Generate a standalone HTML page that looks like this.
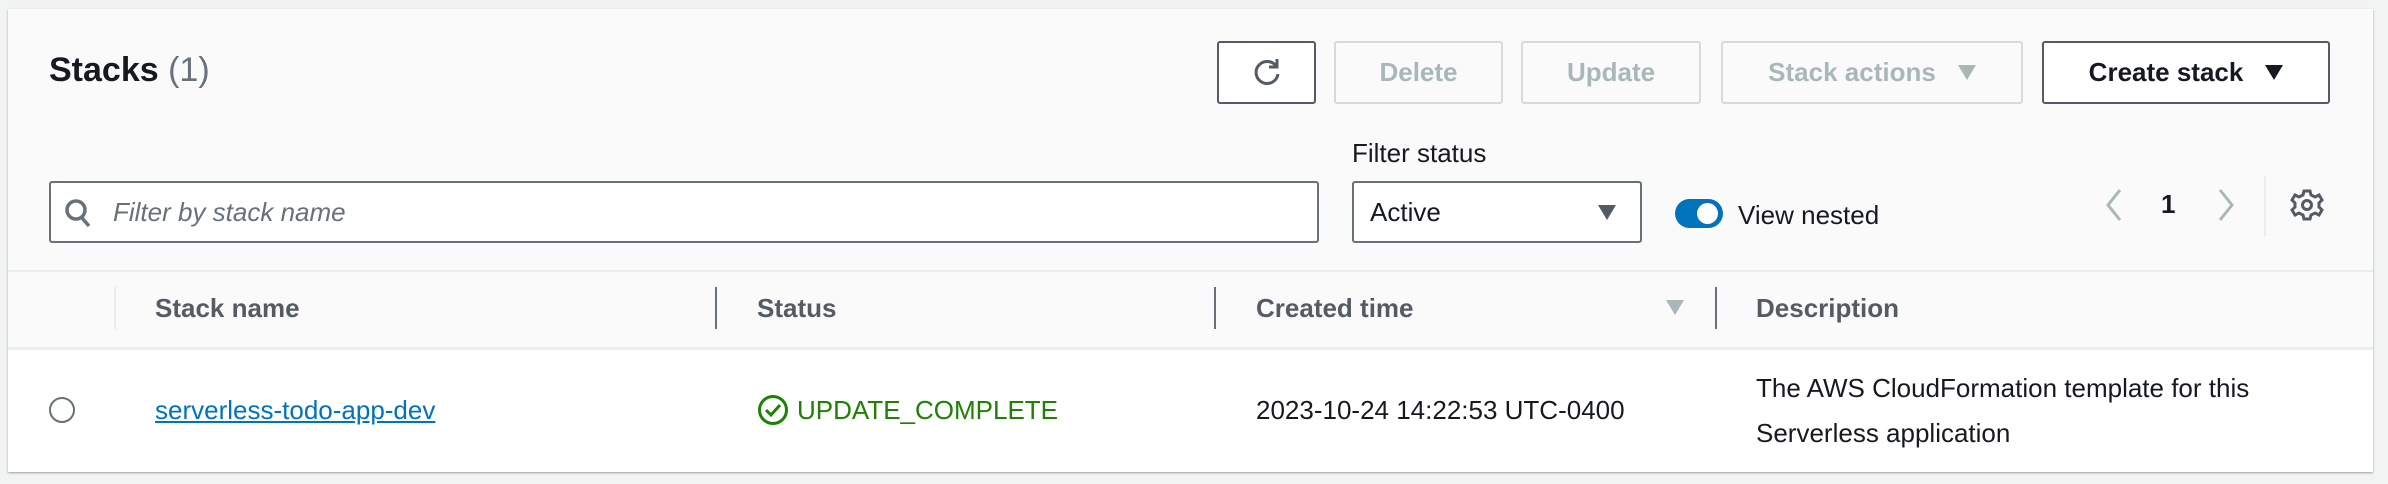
<!DOCTYPE html>
<html><head><meta charset="utf-8"><style>
*{box-sizing:border-box;margin:0;padding:0}
body{width:2388px;height:484px;background:#f2f3f3;font-family:"Liberation Sans",sans-serif;color:#16191f;position:relative;overflow:hidden}
.a{position:absolute}
.panel{left:8px;top:9px;width:2365px;height:463px;background:#fafafa;box-shadow:0 1px 2px rgba(0,0,0,.35)}
.btn{position:absolute;top:41px;height:63px;border:2px solid #545b64;border-radius:3px;background:#fff;font-weight:bold;font-size:26px;display:flex;align-items:center;justify-content:center;color:#545b64}
.dis{border:2px solid #d5dbdb;color:#aab7b8;background:#fafafa}
.tri{display:inline-block;width:0;height:0;border-left:9px solid transparent;border-right:9px solid transparent;border-top:15px solid currentColor;margin-left:22px}
.hd{position:absolute;top:293px;font-size:26px;font-weight:bold;color:#545b64}
.vd{position:absolute;top:287px;width:2px;height:42px;background:#687078}
.tx{position:absolute;font-size:26px}
</style></head><body>
<div class="a panel"></div>
<div class="a" style="left:8px;top:270px;width:2365px;height:2px;background:#eaeded"></div>
<div class="a" style="left:8px;top:347px;width:2365px;height:125px;background:#fff;border-top:3px solid #eaeded"></div>

<div class="a" style="left:49px;top:51px;font-size:34px;font-weight:bold">Stacks <span style="font-weight:normal;color:#687078">(1)</span></div>

<div class="btn" style="left:1217px;width:99px">
<svg width="34" height="34" viewBox="0 0 34 34" fill="none" stroke="#545b64" stroke-width="3"><path d="M26 10 A11 11 0 1 0 28 18"/><path d="M27 3 V11 H19"/></svg></div>
<div class="btn dis" style="left:1334px;width:169px">Delete</div>
<div class="btn dis" style="left:1521px;width:180px">Update</div>
<div class="btn dis" style="left:1721px;width:302px">Stack actions<span class="tri"></span></div>
<div class="btn" style="left:2042px;width:288px;color:#16191f;border-color:#545b64">Create stack<span class="tri"></span></div>

<div class="tx" style="left:1352px;top:138px">Filter status</div>

<div class="a" style="left:49px;top:181px;width:1270px;height:62px;border:2px solid #687078;border-radius:3px;background:#fff"></div>
<svg class="a" style="left:64px;top:197px" width="30" height="32" viewBox="0 0 30 32" fill="none" stroke="#687078" stroke-width="3.5"><circle cx="12" cy="13" r="9"/><path d="M18 21 L25 29"/></svg>
<div class="tx" style="left:113px;top:197px;font-style:italic;color:#687078">Filter by stack name</div>

<div class="a" style="left:1352px;top:181px;width:290px;height:62px;border:2px solid #687078;border-radius:3px;background:#fff"></div>
<div class="tx" style="left:1370px;top:197px">Active</div>
<div class="a" style="left:1598px;top:205px;width:0;height:0;border-left:9px solid transparent;border-right:9px solid transparent;border-top:15px solid #545b64"></div>

<div class="a" style="left:1675px;top:199px;width:48px;height:29px;border-radius:15px;background:#0073bb"></div>
<div class="a" style="left:1697px;top:203px;width:21px;height:21px;border-radius:50%;background:#fff"></div>
<div class="tx" style="left:1738px;top:200px">View nested</div>

<svg class="a" style="left:2104px;top:188px" width="20" height="34" viewBox="0 0 20 34" fill="none" stroke="#aab7b8" stroke-width="3"><path d="M16 2 L4 17 L16 32"/></svg>
<div class="tx" style="left:2161px;top:189px;font-weight:bold">1</div>
<svg class="a" style="left:2216px;top:188px" width="20" height="34" viewBox="0 0 20 34" fill="none" stroke="#aab7b8" stroke-width="3"><path d="M4 2 L16 17 L4 32"/></svg>
<div class="a" style="left:2264px;top:176px;width:2px;height:60px;background:#eaeded"></div>
<svg class="a" style="left:2290px;top:188px" width="34" height="34" viewBox="0 0 34 34" fill="none" stroke="#545b64" stroke-width="3"><path d="M14 3h6l1 4 4 2 4-2 3 5-3 3v4l3 3-3 5-4-2-4 2-1 4h-6l-1-4-4-2-4 2-3-5 3-3v-4l-3-3 3-5 4 2 4-2z"/><circle cx="17" cy="17" r="4.5"/></svg>

<div class="a" style="left:114px;top:287px;width:2px;height:42px;background:#eaeded"></div>
<div class="hd" style="left:155px">Stack name</div>
<div class="vd" style="left:715px"></div>
<div class="hd" style="left:757px">Status</div>
<div class="vd" style="left:1214px"></div>
<div class="hd" style="left:1256px">Created time</div>
<div class="a" style="left:1666px;top:300px;width:0;height:0;border-left:9px solid transparent;border-right:9px solid transparent;border-top:15px solid #aab7b8"></div>
<div class="vd" style="left:1715px"></div>
<div class="hd" style="left:1756px">Description</div>

<div class="a" style="left:49px;top:397px;width:26px;height:26px;border:2px solid #687078;border-radius:50%;background:#fff"></div>
<div class="tx" style="left:155px;top:395px;color:#0073bb;text-decoration:underline">serverless-todo-app-dev</div>
<svg class="a" style="left:757px;top:394px" width="32" height="32" viewBox="0 0 32 32" fill="none" stroke="#1d8102" stroke-width="3"><circle cx="16" cy="16" r="13.5"/><path d="M9 16 L14 21 L23 11"/></svg>
<div class="tx" style="left:797px;top:395px;color:#1d8102">UPDATE_COMPLETE</div>
<div class="tx" style="left:1256px;top:395px">2023-10-24 14:22:53 UTC-0400</div>
<div class="tx" style="left:1756px;top:373px">The AWS CloudFormation template for this</div>
<div class="tx" style="left:1756px;top:418px">Serverless application</div>
</body></html>
